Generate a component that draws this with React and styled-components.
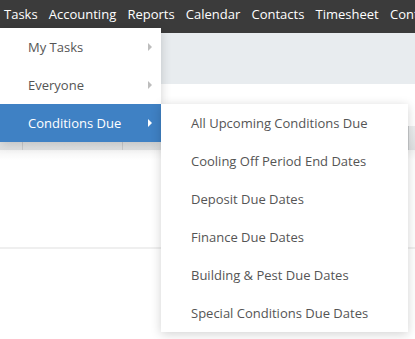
import React from "react";
import styled, { createGlobalStyle } from "styled-components";

const Global = createGlobalStyle`
  html, body { margin: 0; padding: 0; background: #fff; }
  body { font-family: "Open Sans", "Liberation Sans", sans-serif; font-size: 13px; overflow: hidden; }
  * { box-sizing: border-box; }
`;

const Page = styled.div`
  position: relative;
  width: 415px;
  height: 339px;
  overflow: hidden;
`;

const NavBar = styled.nav`
  height: 33px;
  background: #3b3b3b;
  display: flex;
  padding: 4px 0 0 0;
  white-space: nowrap;
  overflow: hidden;
`;

const NavItem = styled.span`
  color: #fff;
  font-size: 13px;
  line-height: 20px;
  padding: 0 5.6px 0 ${(p) => (p.$first ? "4px" : "5.6px")};
`;

const Band = styled.div`
  height: 51px;
  background: #e8ecef;
`;

const Content = styled.div`
  padding-top: 42px;
`;

const HeaderRow = styled.div`
  display: grid;
  grid-template-columns: 23px 100px 286px 1fr;
  height: 24px;
  background: linear-gradient(#eceeef, #dfe1e2);
`;

const HeaderCell = styled.div`
  border-right: 1px solid #c9cbcd;
  &:last-child { border-right: none; }
`;

const Body = styled.div`
  height: 99px;
  border-bottom: 2px solid #efefef;
  background: linear-gradient(#f4f4f4, #fff 10px);
`;

const Menu = styled.ul`
  position: absolute;
  left: ${(p) => p.$left}px;
  top: ${(p) => p.$top}px;
  width: ${(p) => p.$width}px;
  margin: 0;
  padding: 0;
  list-style: none;
  background: #fff;
  box-shadow: 0 2px 10px rgba(0, 0, 0, 0.18);
  z-index: ${(p) => p.$z};
`;

const MenuItem = styled.li`
  position: relative;
  height: 38px;
  line-height: 38px;
  padding-left: ${(p) => p.$indent}px;
  color: ${(p) => (p.$active ? "#fff" : "#555")};
  background: ${(p) => (p.$active ? "#3f81c4" : "transparent")};
  font-size: 13px;
  white-space: nowrap;
`;

const Arrow = styled.span`
  position: absolute;
  right: 9px;
  top: 15px;
  width: 0;
  height: 0;
  border-top: 4px solid transparent;
  border-bottom: 4px solid transparent;
  border-left: 4px solid ${(p) => (p.$active ? "#fff" : "#bdbdbd")};
`;

const navItems = ["Tasks", "Accounting", "Reports", "Calendar", "Contacts", "Timesheet", "Contacts"];
const mainItems = ["My Tasks", "Everyone", "Conditions Due"];
const subItems = [
  "All Upcoming Conditions Due",
  "Cooling Off Period End Dates",
  "Deposit Due Dates",
  "Finance Due Dates",
  "Building & Pest Due Dates",
  "Special Conditions Due Dates",
];

export default function App() {
  return (
    <Page>
      <Global />
      <NavBar>
        {navItems.map((n, i) => (
          <NavItem key={i} $first={i === 0}>{n}</NavItem>
        ))}
      </NavBar>
      <Band />
      <Content>
        <HeaderRow>
          <HeaderCell />
          <HeaderCell />
          <HeaderCell />
          <HeaderCell />
        </HeaderRow>
        <Body />
      </Content>
      <Menu $left={0} $top={28} $width={161} $z={2}>
        {mainItems.map((m, i) => (
          <MenuItem key={m} $indent={28} $active={i === 2}>
            {m}
            <Arrow $active={i === 2} />
          </MenuItem>
        ))}
      </Menu>
      <Menu $left={161} $top={104} $width={247} $z={3}>
        {subItems.map((s) => (
          <MenuItem key={s} $indent={30}>{s}</MenuItem>
        ))}
      </Menu>
    </Page>
  );
}
